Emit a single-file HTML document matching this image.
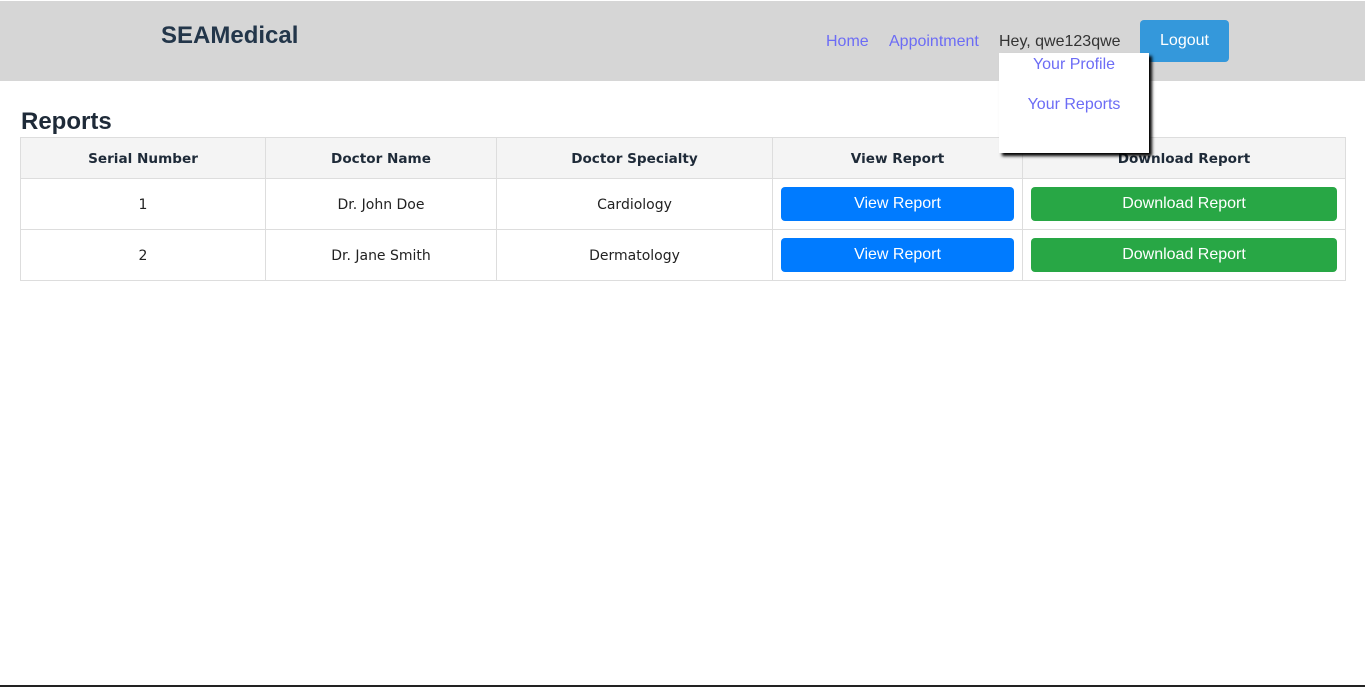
<!DOCTYPE html>
<html><head><style>
*{margin:0;padding:0;box-sizing:border-box}
body{width:1365px;height:687px;background:#fff;font-family:"Liberation Sans",sans-serif;position:relative;overflow:hidden}
.hdr{position:absolute;left:0;top:1px;width:1365px;height:80px;background:#d6d6d6}
.logo{position:absolute;left:161px;top:22px;font-size:24px;font-weight:bold;color:#23364a}
.nav{position:absolute;top:33px;font-size:16px;color:#6c6cf5}
.logout{position:absolute;left:1140px;top:20px;width:89px;height:42px;background:#3498db;border-radius:4px;color:#fff;font-size:16px;text-align:center;line-height:42px}
.dd{position:absolute;left:999px;top:53px;width:150px;height:100px;background:#fff;box-shadow:3px 3px 3px #000;z-index:5}
.dd div{position:absolute;width:150px;text-align:center;color:#6c6cf5;font-size:16px}
h2{position:absolute;left:21px;top:108px;font-size:24px;font-weight:bold;color:#1e2a38;font-family:"Liberation Sans",sans-serif}
table{position:absolute;left:20px;top:137px;width:1326px;border-collapse:collapse;font-family:"DejaVu Sans","Liberation Sans",sans-serif;font-size:14px;color:#222}
td,th{border:1px solid #ddd;text-align:center;padding:2px 8px 0}
th{background:#f4f4f4;height:41px;font-weight:bold;color:#1e2a38;font-size:13.6px}
td{height:51px}
.b{display:block;height:34px;line-height:33px;border-radius:4px;color:#fff;font-family:"Liberation Sans",sans-serif;font-size:16px;margin-top:-2px}
.bl{background:#007bff}.gr{background:#28a745}
.bot{position:absolute;left:0;top:685px;width:1365px;height:2px;background:#222}
</style></head><body>
<div class="hdr"></div>
<div class="logo">SEAMedical</div>
<div class="nav" style="left:826px">Home</div>
<div class="nav" style="left:889px">Appointment</div>
<div class="nav" style="left:999px;color:#333">Hey, qwe123qwe</div>
<div class="logout">Logout</div>
<div class="dd"><div style="top:3px">Your Profile</div><div style="top:43px">Your Reports</div></div>
<h2>Reports</h2>
<table>
<tr><th style="width:245px">Serial Number</th><th style="width:231px">Doctor Name</th><th style="width:276px">Doctor Specialty</th><th style="width:250px">View Report</th><th>Download Report</th></tr>
<tr><td>1</td><td>Dr. John Doe</td><td>Cardiology</td><td><span class="b bl">View Report</span></td><td><span class="b gr">Download Report</span></td></tr>
<tr><td>2</td><td>Dr. Jane Smith</td><td>Dermatology</td><td><span class="b bl">View Report</span></td><td><span class="b gr">Download Report</span></td></tr>
</table>
<div class="bot"></div>
</body></html>
